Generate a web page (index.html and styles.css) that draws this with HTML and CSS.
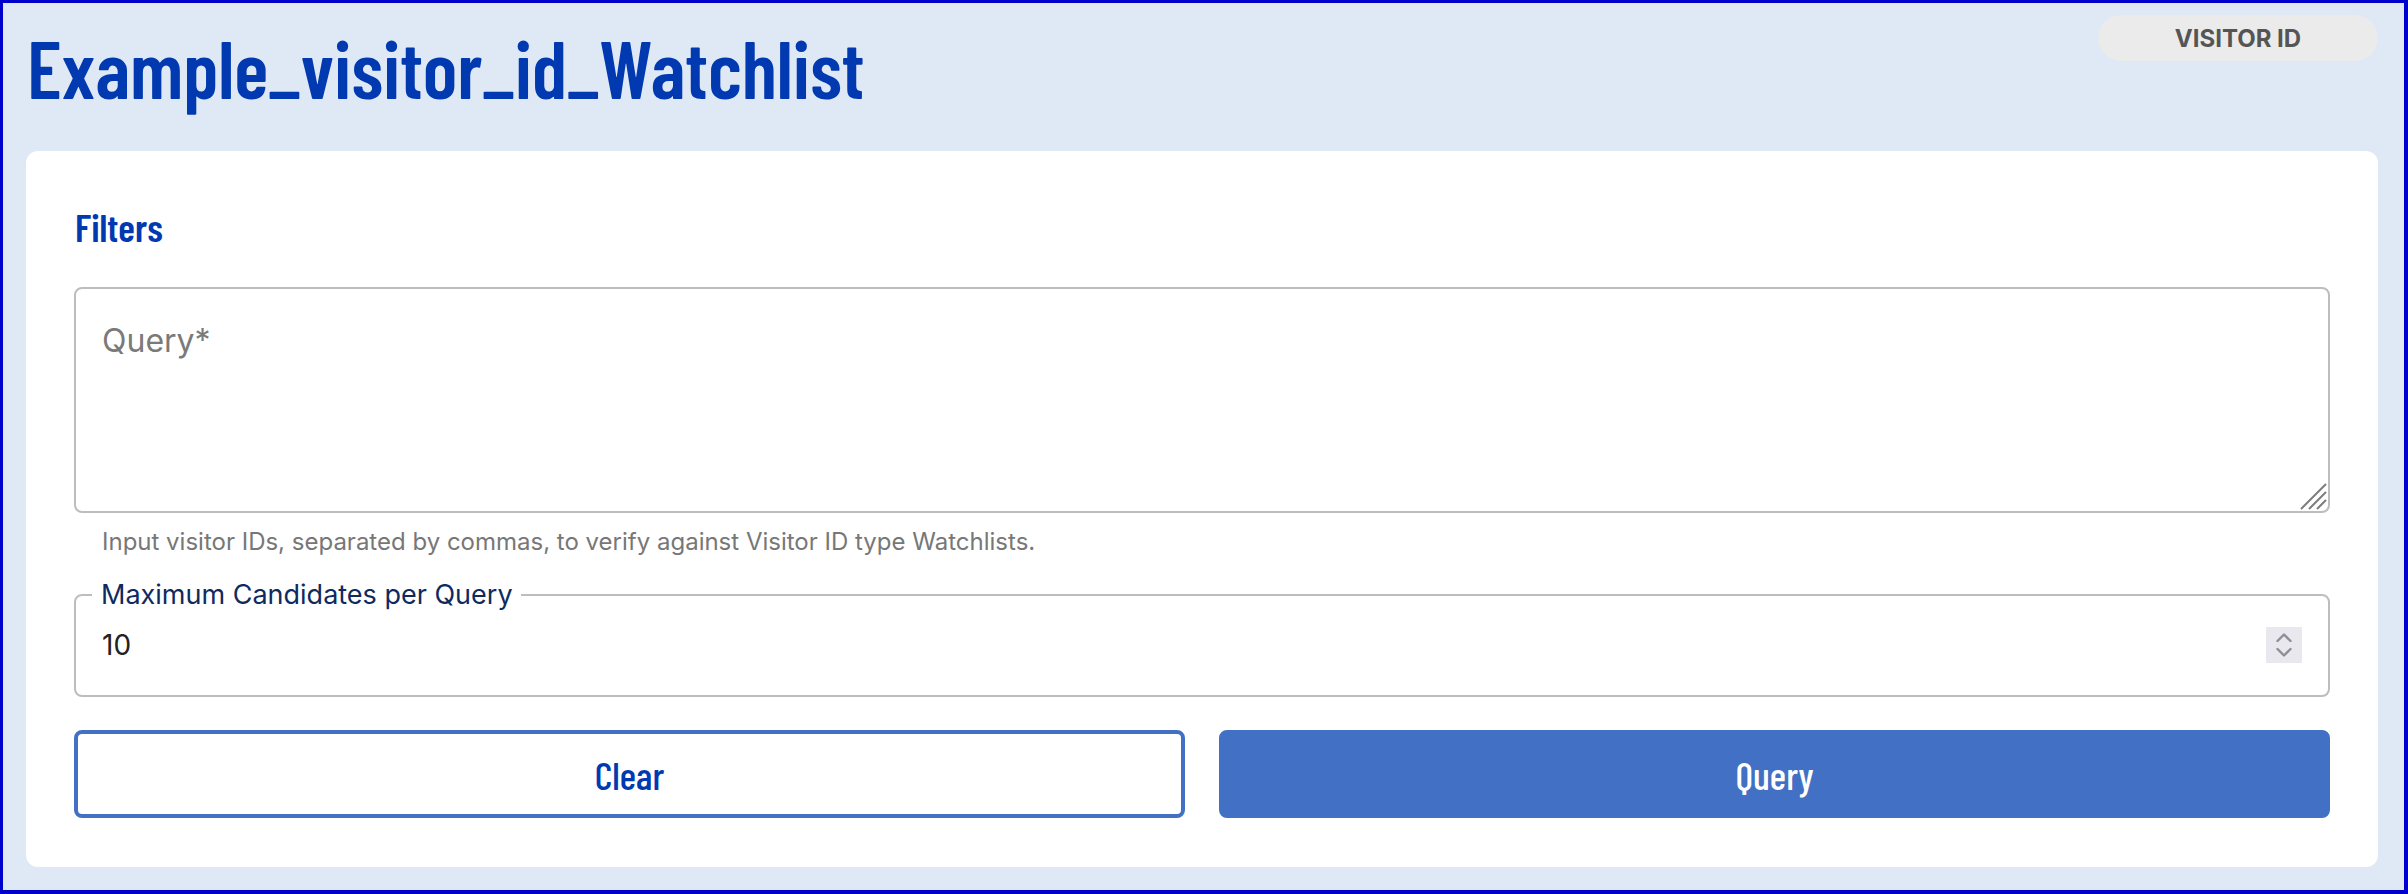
FILE: index.html
```html
<!DOCTYPE html>
<html lang="en">
<head>
<meta charset="utf-8">
<title>Example_visitor_id_Watchlist</title>
<link rel="stylesheet" href="styles.css">
</head>
<body>
<div class="page">
  <header class="header">
    <h1 class="title">Example_visitor_id_Watchlist</h1>
    <span class="chip">VISITOR ID</span>
  </header>
  <main class="card">
    <h2 class="card-title">Filters</h2>
    <div class="query-wrap">
      <textarea class="query-input" placeholder="Query*"></textarea>
      <svg class="resize-handle" width="28" height="28" viewBox="0 0 28 28" aria-hidden="true">
        <path d="M2 27 L27 2 M10 27 L27 10 M18 27 L27 18" fill="none" stroke="#7d7d7d" stroke-width="2"/>
      </svg>
    </div>
    <p class="helper">Input visitor IDs, separated by commas, to verify against Visitor ID type Watchlists.</p>
    <fieldset class="number-field">
      <legend class="number-label">Maximum Candidates per Query</legend>
      <div class="number-row">
        <span class="number-value">10</span>
        <span class="spinner">
          <svg width="22" height="32" viewBox="0 0 22 32" aria-hidden="true">
            <path d="M4.5 12 L11 5.5 L17.5 12" fill="none" stroke="#8e8e98" stroke-width="2.4" stroke-linecap="round" stroke-linejoin="round"/>
            <path d="M4.5 20 L11 26.5 L17.5 20" fill="none" stroke="#8e8e98" stroke-width="2.4" stroke-linecap="round" stroke-linejoin="round"/>
          </svg>
        </span>
      </div>
    </fieldset>
    <div class="actions">
      <button class="btn btn-outline" type="button">Clear</button>
      <button class="btn btn-solid" type="button">Query</button>
    </div>
  </main>
</div>
</body>
</html>
```
FILE: styles.css
```css
html, body {
  margin: 0;
  padding: 0;
}

.page {
  box-sizing: border-box;
  width: 2408px;
  height: 894px;
  border: solid #0000cd;
  border-width: 3px 4px 4px 3px;
  background: #dfe8f5;
  padding: 12px 26px 23px 23px;
  display: flex;
  flex-direction: column;
}

.header {
  display: flex;
  justify-content: space-between;
  align-items: flex-start;
  height: 101px;
  margin-bottom: 35px;
}

.title {
  margin: 4px 0 0 1px;
  font-family: "Barlow Condensed", "Roboto Condensed", sans-serif;
  font-weight: 600;
  font-size: 80px;
  line-height: 96px;
  color: #0039b0;
}

.chip {
  box-sizing: border-box;
  width: 280px;
  height: 46px;
  border-radius: 23px;
  background: #ebebeb;
  color: #555555;
  font-family: "Inter", sans-serif;
  font-weight: 700;
  font-size: 24px;
  display: flex;
  align-items: center;
  justify-content: center;
}

.card {
  flex: 1;
  background: #ffffff;
  border-radius: 12px;
  padding: 48px;
  display: flex;
  flex-direction: column;
}

.card-title {
  margin: 5px 0 37px 1px;
  font-family: "Barlow Condensed", "Roboto Condensed", sans-serif;
  font-weight: 600;
  font-size: 39px;
  line-height: 46px;
  color: #0039b0;
}

.query-wrap {
  position: relative;
}

.query-input {
  box-sizing: border-box;
  display: block;
  width: 100%;
  height: 226px;
  margin: 0;
  border: 2px solid #bdbdbd;
  border-radius: 8px;
  padding: 34px 26px;
  font-family: "Inter", sans-serif;
  font-size: 32px;
  line-height: 36px;
  color: #222;
  background: #fff;
  resize: none;
  outline: none;
}

.query-input::placeholder {
  color: #7a7a7a;
}

.resize-handle {
  position: absolute;
  right: 3px;
  bottom: 3px;
}

.helper {
  margin: 14px 0 0 28px;
  font-family: "Inter", sans-serif;
  font-size: 24px;
  line-height: 29px;
  color: #777777;
}

.number-field {
  margin: 22px 0 0;
  border: 2px solid #bdbdbd;
  border-radius: 8px;
  padding: 16px 26px 32px 26px;
  min-width: 0;
}

.number-label {
  margin-left: -10px;
  padding: 0 8px 0 9px;
  font-family: "Inter", sans-serif;
  font-size: 27px;
  line-height: 33px;
  color: #0f2a5f;
}

.number-row {
  display: flex;
  align-items: center;
  justify-content: space-between;
  height: 36px;
}

.number-value {
  font-family: "Inter", sans-serif;
  font-size: 28px;
  color: #222222;
}

.spinner {
  width: 36px;
  height: 36px;
  background: #e8e8ee;
  display: flex;
  align-items: center;
  justify-content: center;
}

.actions {
  margin-top: 33px;
  display: grid;
  grid-template-columns: 1fr 1fr;
  gap: 34px;
}

.btn {
  box-sizing: border-box;
  height: 88px;
  border-radius: 8px;
  font-family: "Barlow Condensed", "Roboto Condensed", sans-serif;
  font-weight: 500;
  font-size: 39px;
  cursor: pointer;
}

.btn-outline {
  background: #ffffff;
  border: 4px solid #4170c4;
  color: #0039b0;
}

.btn-solid {
  background: #4170c4;
  border: 4px solid #4170c4;
  color: #ffffff;
}
```
